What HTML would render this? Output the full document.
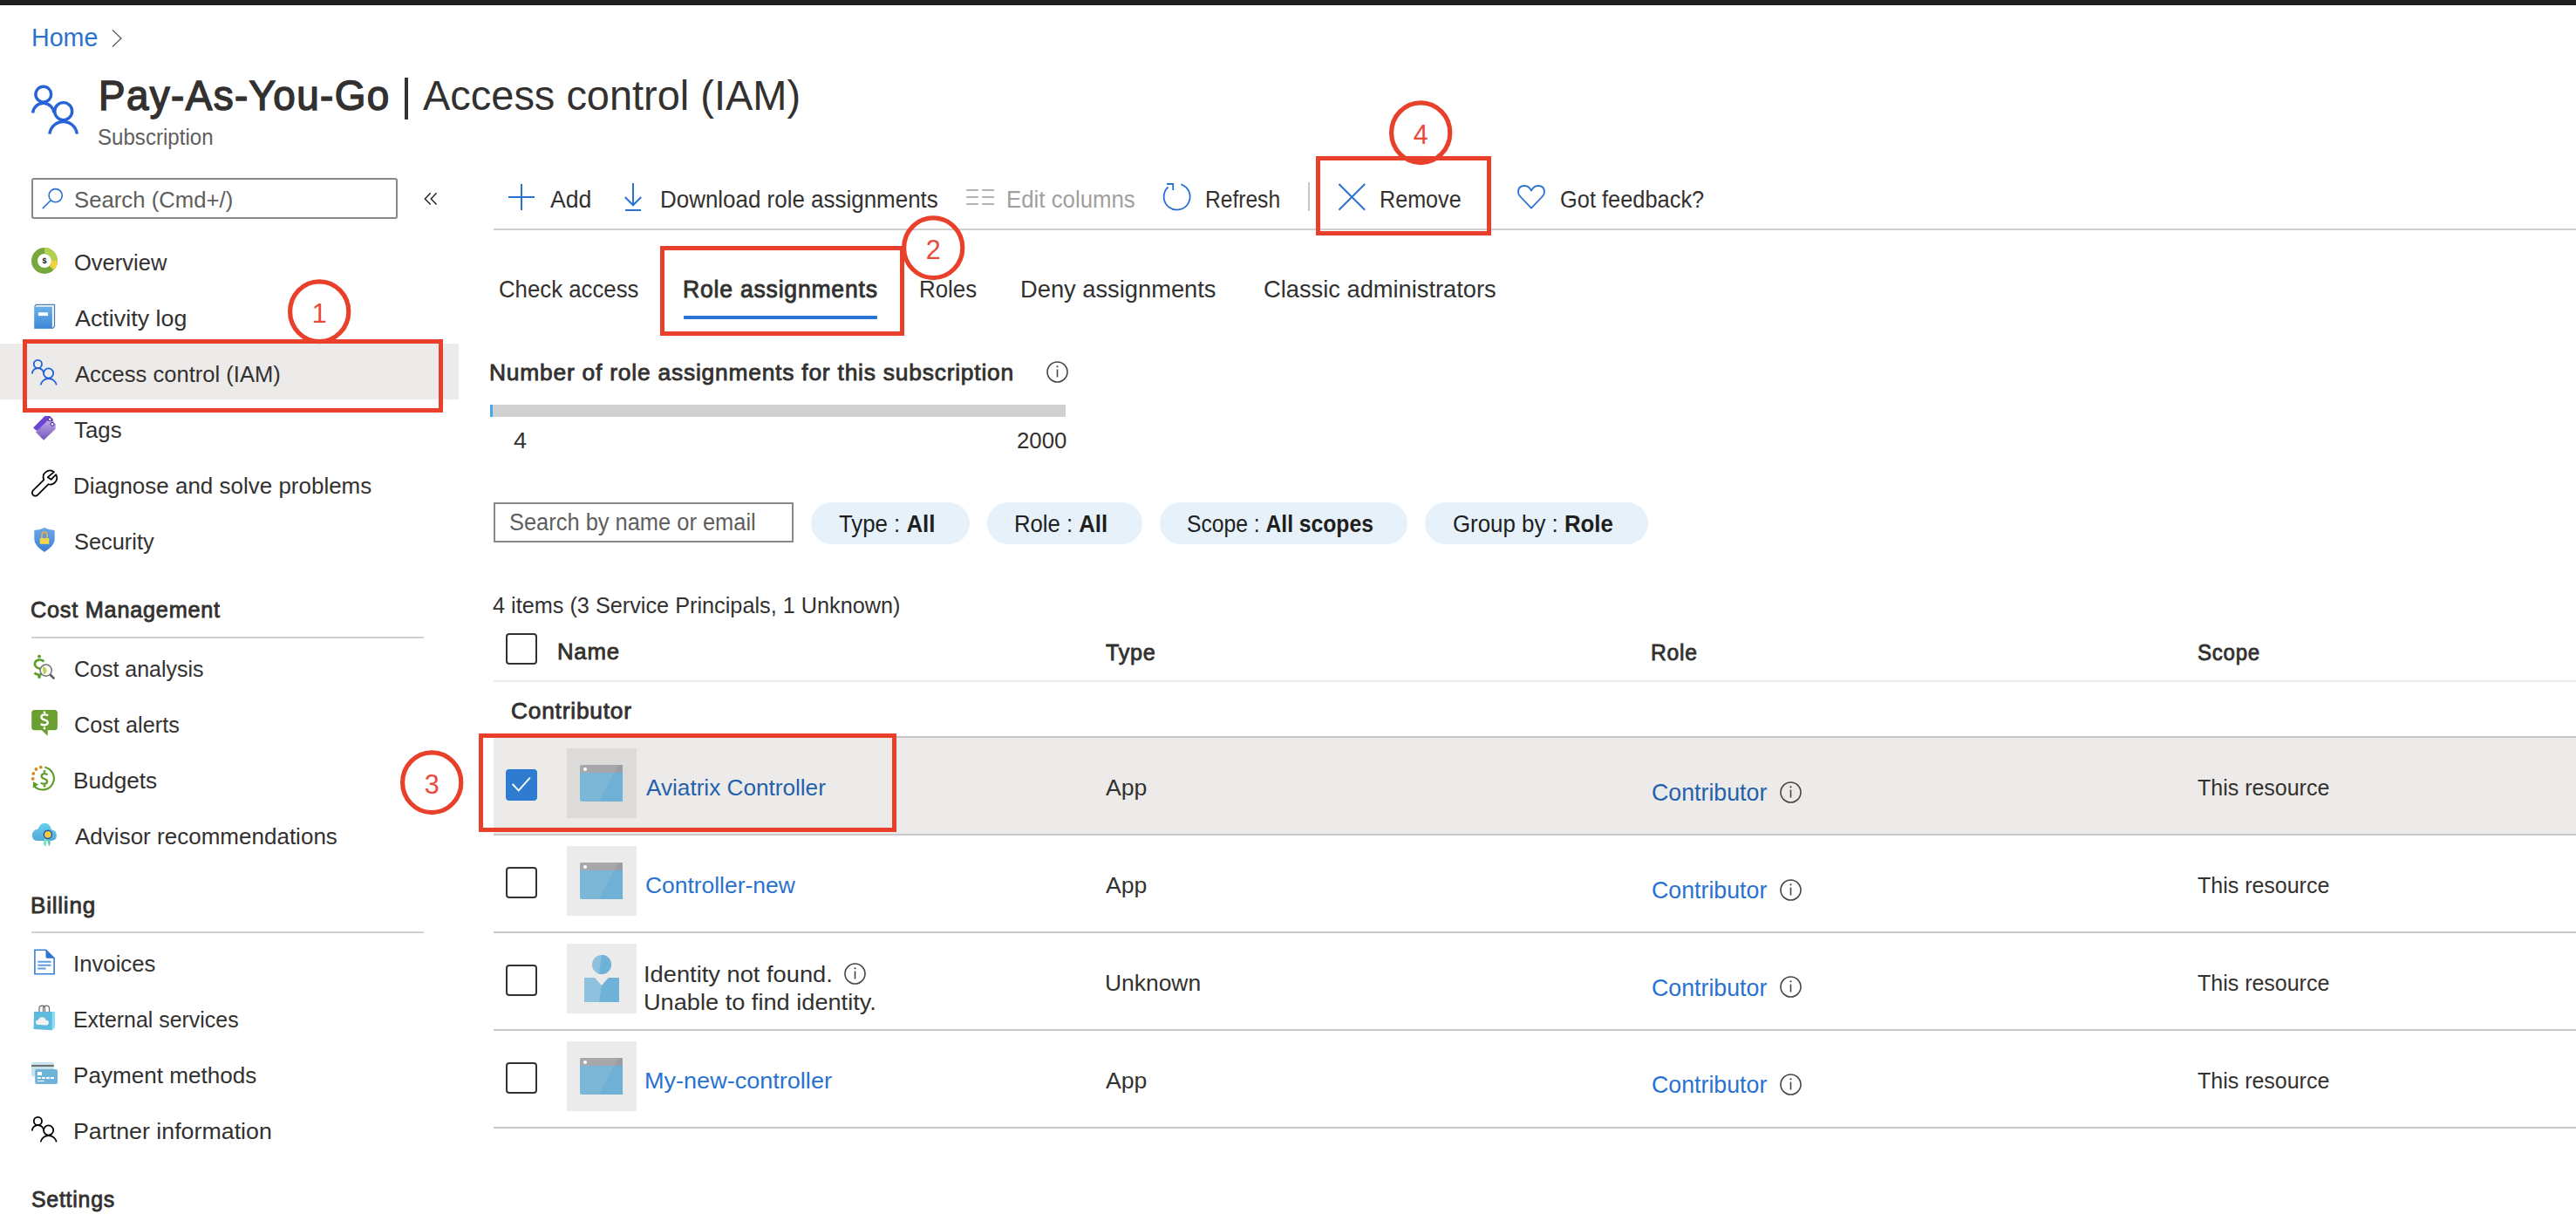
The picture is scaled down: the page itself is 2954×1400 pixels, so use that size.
<!DOCTYPE html>
<html><head><meta charset="utf-8"><title>Access control (IAM)</title>
<style>
html,body{margin:0;padding:0;background:#fff;}
body{width:2954px;height:1400px;position:relative;overflow:hidden;font-family:"Liberation Sans",sans-serif;}
.t{position:absolute;white-space:nowrap;line-height:1;transform-origin:0 0;}
.t b{font-weight:700;}
.r{position:absolute;}
svg{position:absolute;overflow:visible;}
</style></head><body>

<div class="r" style="left:0;top:0;width:2954px;height:6px;background:#1f1f1f"></div>
<div class="r" style="left:0;top:394px;width:526px;height:64px;background:#edebe9"></div>
<div class="r" style="left:36px;top:204px;width:416px;height:43px;border:2px solid #8a8886;border-radius:3px"></div>
<div class="r" style="left:36px;top:730px;width:450px;height:2px;background:#d2d0ce"></div>
<div class="r" style="left:36px;top:1068px;width:450px;height:2px;background:#d2d0ce"></div>
<div class="r" style="left:566px;top:262px;width:2388px;height:2px;background:#d2d0ce"></div>
<div class="r" style="left:1500px;top:209px;width:2px;height:33px;background:#c8c6c4"></div>
<div class="r" style="left:784px;top:362px;width:222px;height:4px;background:#2b74d4;border-radius:1px"></div>
<div class="r" style="left:562px;top:464px;width:660px;height:14px;background:#d0d0d0"></div>
<div class="r" style="left:562px;top:464px;width:2.5px;height:14px;background:#45a8e8"></div>
<div class="r" style="left:566px;top:576px;width:340px;height:42px;border:2px solid #8a8886"></div>
<div class="r" style="left:929.5px;top:576px;width:182.5px;height:48px;border-radius:24px;background:#e7f1fa"></div>
<div class="r" style="left:1131.7px;top:576px;width:178.3px;height:48px;border-radius:24px;background:#e7f1fa"></div>
<div class="r" style="left:1330px;top:576px;width:284.0px;height:48px;border-radius:24px;background:#e7f1fa"></div>
<div class="r" style="left:1634px;top:576px;width:256.0px;height:48px;border-radius:24px;background:#e7f1fa"></div>
<div class="r" style="left:580px;top:726px;width:32px;height:32px;border:2px solid #323130;border-radius:4px"></div>
<div class="r" style="left:566px;top:780px;width:2388px;height:2px;background:#edebe9"></div>
<div class="r" style="left:566px;top:844px;width:2388px;height:2px;background:#c8c6c4"></div>
<div class="r" style="left:566px;top:846px;width:2388px;height:110px;background:#edebe9"></div>
<div class="r" style="left:566px;top:956px;width:2388px;height:2px;background:#c8c8c8"></div>
<div class="r" style="left:566px;top:1068px;width:2388px;height:2px;background:#c8c8c8"></div>
<div class="r" style="left:566px;top:1180px;width:2388px;height:2px;background:#c8c8c8"></div>
<div class="r" style="left:566px;top:1292px;width:2388px;height:2px;background:#c8c8c8"></div>
<div class="r" style="left:580px;top:882px;width:36px;height:36px;background:#2f7bd0;border-radius:4px"></div>
<svg width="36" height="36" style="left:580px;top:882px"><path d="M7.6 17 L14.7 24.3 L27.9 9.7" fill="none" stroke="#fff" stroke-width="1.9"/></svg>
<div class="r" style="left:580px;top:994px;width:32px;height:32px;border:2px solid #323130;border-radius:4px"></div>
<div class="r" style="left:580px;top:1106px;width:32px;height:32px;border:2px solid #323130;border-radius:4px"></div>
<div class="r" style="left:580px;top:1218px;width:32px;height:32px;border:2px solid #323130;border-radius:4px"></div>
<div class="r" style="left:650px;top:858px;width:80px;height:80px;background:#dcdbd9"></div>
<div class="r" style="left:650px;top:970px;width:80px;height:80px;background:#ebebeb"></div>
<div class="r" style="left:650px;top:1082px;width:80px;height:80px;background:#ebebeb"></div>
<div class="r" style="left:650px;top:1194px;width:80px;height:80px;background:#ebebeb"></div>
<svg width="50" height="42" style="left:665px;top:877px" viewBox="0 0 50 42"><rect x="0" y="0" width="49" height="42" rx="2" fill="#7db7d8"/><path d="M22 42 L44 0 L49 0 L49 42 Z" fill="#6eb0d6"/><path d="M0 2 Q0 0 2 0 L47 0 Q49 0 49 2 L49 9 L0 9 Z" fill="#a7a8ab"/><path d="M44 0 L47 0 Q49 0 49 2 L49 9 L39.5 9 Z" fill="#9d9ea1"/><circle cx="6" cy="5" r="2" fill="#fff"/></svg>
<svg width="50" height="42" style="left:665px;top:989px" viewBox="0 0 50 42"><rect x="0" y="0" width="49" height="42" rx="2" fill="#7db7d8"/><path d="M22 42 L44 0 L49 0 L49 42 Z" fill="#6eb0d6"/><path d="M0 2 Q0 0 2 0 L47 0 Q49 0 49 2 L49 9 L0 9 Z" fill="#a7a8ab"/><path d="M44 0 L47 0 Q49 0 49 2 L49 9 L39.5 9 Z" fill="#9d9ea1"/><circle cx="6" cy="5" r="2" fill="#fff"/></svg>
<svg width="50" height="42" style="left:665px;top:1213px" viewBox="0 0 50 42"><rect x="0" y="0" width="49" height="42" rx="2" fill="#7db7d8"/><path d="M22 42 L44 0 L49 0 L49 42 Z" fill="#6eb0d6"/><path d="M0 2 Q0 0 2 0 L47 0 Q49 0 49 2 L49 9 L0 9 Z" fill="#a7a8ab"/><path d="M44 0 L47 0 Q49 0 49 2 L49 9 L39.5 9 Z" fill="#9d9ea1"/><circle cx="6" cy="5" r="2" fill="#fff"/></svg>
<svg width="50" height="50" style="left:665px;top:1092px" viewBox="0 0 50 50"><circle cx="25" cy="14" r="11" fill="#8fc1de"/><path d="M25 3 A11 11 0 0 1 25 25 L22 25 Z" fill="#6fb2d7"/><path d="M5 29 L17 29 L25 38 L33 29 L45 29 L45 57 L5 57 Z" fill="#8fc1de"/><path d="M25 38 L33 29 L45 29 L45 57 L22 57 Z" fill="#6fb2d7"/></svg>
<svg width="27.0" height="27.0" style="left:1198.5px;top:412.5px" viewBox="-13.5 -13.5 27.0 27.0"><circle cx="0" cy="0" r="11.5" fill="none" stroke="#484644" stroke-width="1.6"/><rect x="-0.8" y="-3" width="1.6" height="9" fill="#484644"/><circle cx="0" cy="-6.2" r="1.1" fill="#484644"/></svg>
<svg width="27.0" height="27.0" style="left:966.7px;top:1102.5px" viewBox="-13.5 -13.5 27.0 27.0"><circle cx="0" cy="0" r="11.5" fill="none" stroke="#484644" stroke-width="1.6"/><rect x="-0.8" y="-3" width="1.6" height="9" fill="#484644"/><circle cx="0" cy="-6.2" r="1.1" fill="#484644"/></svg>
<svg width="27.0" height="27.0" style="left:2040.3000000000002px;top:894.5px" viewBox="-13.5 -13.5 27.0 27.0"><circle cx="0" cy="0" r="11.5" fill="none" stroke="#484644" stroke-width="1.6"/><rect x="-0.8" y="-3" width="1.6" height="9" fill="#484644"/><circle cx="0" cy="-6.2" r="1.1" fill="#484644"/></svg>
<svg width="27.0" height="27.0" style="left:2040.3000000000002px;top:1006.5px" viewBox="-13.5 -13.5 27.0 27.0"><circle cx="0" cy="0" r="11.5" fill="none" stroke="#484644" stroke-width="1.6"/><rect x="-0.8" y="-3" width="1.6" height="9" fill="#484644"/><circle cx="0" cy="-6.2" r="1.1" fill="#484644"/></svg>
<svg width="27.0" height="27.0" style="left:2040.3000000000002px;top:1118.0px" viewBox="-13.5 -13.5 27.0 27.0"><circle cx="0" cy="0" r="11.5" fill="none" stroke="#484644" stroke-width="1.6"/><rect x="-0.8" y="-3" width="1.6" height="9" fill="#484644"/><circle cx="0" cy="-6.2" r="1.1" fill="#484644"/></svg>
<svg width="27.0" height="27.0" style="left:2040.3000000000002px;top:1229.5px" viewBox="-13.5 -13.5 27.0 27.0"><circle cx="0" cy="0" r="11.5" fill="none" stroke="#484644" stroke-width="1.6"/><rect x="-0.8" y="-3" width="1.6" height="9" fill="#484644"/><circle cx="0" cy="-6.2" r="1.1" fill="#484644"/></svg>
<div class="t" style="left:35.73px;top:29.49px;font-size:29.07px;font-weight:400;color:#2a72d0;transform:scaleX(0.9851)">Home</div>
<div class="t" style="left:112.99px;top:84.76px;font-size:48.98px;font-weight:400;color:#323130;-webkit-text-stroke:1.57px #323130;letter-spacing:1.47px;transform:scaleX(0.9358)">Pay-As-You-Go</div>
<div class="t" style="left:485.20px;top:84.76px;font-size:48.98px;font-weight:400;color:#323130;transform:scaleX(0.9588)">Access control (IAM)</div>
<div class="t" style="left:112.05px;top:144.78px;font-size:25.44px;font-weight:400;color:#605e5c;transform:scaleX(0.9467)">Subscription</div>
<div class="t" style="left:85.02px;top:216.26px;font-size:26.16px;font-weight:400;color:#605e5c;transform:scaleX(0.9836)">Search (Cmd+/)</div>
<div class="t" style="left:85.03px;top:288.01px;font-size:26.45px;font-weight:400;color:#323130;transform:scaleX(0.9656)">Overview</div>
<div class="t" style="left:86.00px;top:352.01px;font-size:26.45px;font-weight:400;color:#323130;transform:scaleX(1.0160)">Activity log</div>
<div class="t" style="left:86.00px;top:415.51px;font-size:26.45px;font-weight:400;color:#323130;transform:scaleX(0.9669)">Access control (IAM)</div>
<div class="t" style="left:85.02px;top:480.01px;font-size:26.45px;font-weight:400;color:#323130;transform:scaleX(0.9769)">Tags</div>
<div class="t" style="left:84.03px;top:544.26px;font-size:26.45px;font-weight:400;color:#323130;transform:scaleX(0.9826)">Diagnose and solve problems</div>
<div class="t" style="left:85.04px;top:608.01px;font-size:26.45px;font-weight:400;color:#323130;transform:scaleX(0.9601)">Security</div>
<div class="t" style="left:35.03px;top:686.26px;font-size:26.16px;font-weight:400;color:#323130;-webkit-text-stroke:0.84px #323130;letter-spacing:0.78px;transform:scaleX(0.9665)">Cost Management</div>
<div class="t" style="left:85.05px;top:753.76px;font-size:26.45px;font-weight:400;color:#323130;transform:scaleX(0.9452)">Cost analysis</div>
<div class="t" style="left:85.04px;top:817.51px;font-size:26.45px;font-weight:400;color:#323130;transform:scaleX(0.9560)">Cost alerts</div>
<div class="t" style="left:84.02px;top:882.01px;font-size:26.45px;font-weight:400;color:#323130;transform:scaleX(0.9920)">Budgets</div>
<div class="t" style="left:86.00px;top:946.01px;font-size:26.45px;font-weight:400;color:#323130;transform:scaleX(0.9844)">Advisor recommendations</div>
<div class="t" style="left:35.01px;top:1024.51px;font-size:26.16px;font-weight:400;color:#323130;-webkit-text-stroke:0.84px #323130;letter-spacing:0.78px;transform:scaleX(0.9965)">Billing</div>
<div class="t" style="left:84.05px;top:1091.76px;font-size:26.45px;font-weight:400;color:#323130;transform:scaleX(0.9734)">Invoices</div>
<div class="t" style="left:84.12px;top:1156.01px;font-size:26.45px;font-weight:400;color:#323130;transform:scaleX(0.9419)">External services</div>
<div class="t" style="left:84.03px;top:1220.01px;font-size:26.45px;font-weight:400;color:#323130;transform:scaleX(0.9869)">Payment methods</div>
<div class="t" style="left:83.97px;top:1284.01px;font-size:26.45px;font-weight:400;color:#323130;transform:scaleX(1.0136)">Partner information</div>
<div class="t" style="left:35.95px;top:1362.26px;font-size:26.16px;font-weight:400;color:#323130;-webkit-text-stroke:0.84px #323130;letter-spacing:0.78px;transform:scaleX(0.9525)">Settings</div>
<div class="t" style="left:630.50px;top:215.64px;font-size:26.89px;font-weight:400;color:#323130;transform:scaleX(0.9891)">Add</div>
<div class="t" style="left:756.82px;top:215.64px;font-size:26.89px;font-weight:400;color:#323130;transform:scaleX(0.9656)">Download role assignments</div>
<div class="t" style="left:1154.33px;top:215.64px;font-size:26.89px;font-weight:400;color:#a19f9d;transform:scaleX(0.9603)">Edit columns</div>
<div class="t" style="left:1381.92px;top:215.64px;font-size:26.89px;font-weight:400;color:#323130;transform:scaleX(0.9148)">Refresh</div>
<div class="t" style="left:1581.88px;top:215.64px;font-size:26.89px;font-weight:400;color:#323130;transform:scaleX(0.9356)">Remove</div>
<div class="t" style="left:1788.55px;top:215.64px;font-size:26.89px;font-weight:400;color:#323130;transform:scaleX(0.9451)">Got feedback?</div>
<div class="t" style="left:572.08px;top:317.66px;font-size:28.05px;font-weight:400;color:#323130;transform:scaleX(0.9191)">Check access</div>
<div class="t" style="left:783.11px;top:317.66px;font-size:28.05px;font-weight:400;color:#323130;-webkit-text-stroke:0.90px #323130;letter-spacing:0.84px;transform:scaleX(0.9464)">Role assignments</div>
<div class="t" style="left:1053.86px;top:317.66px;font-size:28.05px;font-weight:400;color:#323130;transform:scaleX(0.9217)">Roles</div>
<div class="t" style="left:1169.95px;top:317.66px;font-size:28.05px;font-weight:400;color:#323130;transform:scaleX(0.9730)">Deny assignments</div>
<div class="t" style="left:1449.03px;top:317.66px;font-size:28.05px;font-weight:400;color:#323130;transform:scaleX(0.9724)">Classic administrators</div>
<div class="t" style="left:561.02px;top:414.19px;font-size:26.60px;font-weight:400;color:#323130;-webkit-text-stroke:0.85px #323130;letter-spacing:0.80px;transform:scaleX(0.9910)">Number of role assignments for this subscription</div>
<div class="t" style="left:588.78px;top:492.19px;font-size:26.60px;font-weight:400;color:#323130;transform:scaleX(1.0154)">4</div>
<div class="t" style="left:1165.53px;top:492.19px;font-size:26.60px;font-weight:400;color:#323130;transform:scaleX(0.9684)">2000</div>
<div class="t" style="left:583.95px;top:585.77px;font-size:26.74px;font-weight:400;color:#605e5c;transform:scaleX(0.9512)">Search by name or email</div>
<div class="t" style="left:962.07px;top:586.83px;font-size:27.62px;font-weight:400;color:#201f1e;transform:scaleX(0.9348)">Type : <b>All</b></div>
<div class="t" style="left:1163.14px;top:586.83px;font-size:27.62px;font-weight:400;color:#201f1e;transform:scaleX(0.9306)">Role : <b>All</b></div>
<div class="t" style="left:1361.41px;top:586.83px;font-size:27.62px;font-weight:400;color:#201f1e;transform:scaleX(0.8932)">Scope : <b>All scopes</b></div>
<div class="t" style="left:1665.76px;top:586.83px;font-size:27.62px;font-weight:400;color:#201f1e;transform:scaleX(0.9364)">Group by : <b>Role</b></div>
<div class="t" style="left:565.02px;top:682.41px;font-size:25.87px;font-weight:400;color:#323130;transform:scaleX(0.9769)">4 items (3 Service Principals, 1 Unknown)</div>
<div class="t" style="left:639.33px;top:734.06px;font-size:26.16px;font-weight:400;color:#323130;-webkit-text-stroke:0.84px #323130;letter-spacing:0.78px;transform:scaleX(0.9843)">Name</div>
<div class="t" style="left:1268.30px;top:734.76px;font-size:26.16px;font-weight:400;color:#323130;-webkit-text-stroke:0.84px #323130;letter-spacing:0.78px;transform:scaleX(0.9610)">Type</div>
<div class="t" style="left:1893.11px;top:734.76px;font-size:26.16px;font-weight:400;color:#323130;-webkit-text-stroke:0.84px #323130;letter-spacing:0.78px;transform:scaleX(0.9444)">Role</div>
<div class="t" style="left:2519.78px;top:734.76px;font-size:26.16px;font-weight:400;color:#323130;-webkit-text-stroke:0.84px #323130;letter-spacing:0.78px;transform:scaleX(0.9211)">Scope</div>
<div class="t" style="left:585.99px;top:802.06px;font-size:26.16px;font-weight:400;color:#323130;-webkit-text-stroke:0.84px #323130;letter-spacing:0.78px;transform:scaleX(1.0059)">Contributor</div>
<div class="t" style="left:740.50px;top:889.51px;font-size:26.45px;font-weight:400;color:#2461ab;transform:scaleX(0.9889)">Aviatrix Controller</div>
<div class="t" style="left:1268.00px;top:889.71px;font-size:26.45px;font-weight:400;color:#323130;transform:scaleX(1.0065)">App</div>
<div class="t" style="left:1894.01px;top:895.82px;font-size:27.03px;font-weight:400;color:#2461ab;transform:scaleX(0.9902)">Contributor</div>
<div class="t" style="left:2519.76px;top:889.71px;font-size:26.45px;font-weight:400;color:#323130;transform:scaleX(0.9449)">This resource</div>
<div class="t" style="left:739.50px;top:1001.51px;font-size:26.45px;font-weight:400;color:#2a72d0;transform:scaleX(0.9988)">Controller-new</div>
<div class="t" style="left:1268.00px;top:1001.71px;font-size:26.45px;font-weight:400;color:#323130;transform:scaleX(1.0065)">App</div>
<div class="t" style="left:1894.01px;top:1008.02px;font-size:27.03px;font-weight:400;color:#2a72d0;transform:scaleX(0.9902)">Contributor</div>
<div class="t" style="left:2519.76px;top:1002.01px;font-size:26.45px;font-weight:400;color:#323130;transform:scaleX(0.9449)">This resource</div>
<div class="t" style="left:738.44px;top:1104.01px;font-size:26.45px;font-weight:400;color:#323130;transform:scaleX(1.0316)">Identity not found.</div>
<div class="t" style="left:738.44px;top:1135.81px;font-size:26.45px;font-weight:400;color:#323130;transform:scaleX(1.0278)">Unable to find identity.</div>
<div class="t" style="left:1267.00px;top:1113.81px;font-size:26.45px;font-weight:400;color:#323130;transform:scaleX(0.9991)">Unknown</div>
<div class="t" style="left:1894.01px;top:1119.62px;font-size:27.03px;font-weight:400;color:#2a72d0;transform:scaleX(0.9902)">Contributor</div>
<div class="t" style="left:2519.76px;top:1113.91px;font-size:26.45px;font-weight:400;color:#323130;transform:scaleX(0.9449)">This resource</div>
<div class="t" style="left:738.95px;top:1226.21px;font-size:26.45px;font-weight:400;color:#2a72d0;transform:scaleX(1.0231)">My-new-controller</div>
<div class="t" style="left:1268.00px;top:1226.01px;font-size:26.45px;font-weight:400;color:#323130;transform:scaleX(1.0065)">App</div>
<div class="t" style="left:1894.01px;top:1230.92px;font-size:27.03px;font-weight:400;color:#2a72d0;transform:scaleX(0.9902)">Contributor</div>
<div class="t" style="left:2519.76px;top:1226.01px;font-size:26.45px;font-weight:400;color:#323130;transform:scaleX(0.9449)">This resource</div>
<div class="r" style="left:464px;top:89px;width:4px;height:48px;background:#323130"></div>
<svg width="20" height="30" style="left:124px;top:30px" viewBox="124 30 20 30"><path d="M129 34.5 L139 44 L129 53.5" fill="none" stroke="#605e5c" stroke-width="1.3"/></svg>
<svg width="70" height="70" style="left:30px;top:90px" viewBox="30 90 70 70" fill="none" stroke="#2563d6" stroke-width="3.4"><circle cx="49.8" cy="108.2" r="8.9"/><path d="M37.6 129.5 A12.2 12.2 0 0 1 61.9 129.3"/><circle cx="72.7" cy="127.6" r="10"/><path d="M56.9 153.6 A15.8 15.8 0 0 1 88.3 153.6"/></svg>
<svg width="40" height="40" style="left:40px;top:206px" viewBox="40 206 40 40" fill="none" stroke="#2a72d0" stroke-width="1.6"><circle cx="63.7" cy="224.2" r="7.6"/><path d="M58.2 229.7 L48.8 239.1"/></svg>
<svg width="40" height="40" style="left:476px;top:208px" viewBox="476 208 40 40" fill="none" stroke="#201f1e" stroke-width="1.4"><path d="M493.7 221.3 L487.3 227.9 L493.7 234.6 M500.6 221.3 L494.2 227.9 L500.6 234.6"/></svg>
<svg width="42" height="42" style="left:30px;top:406px" viewBox="30 406 42 42" fill="none" stroke="#1f5fd8" stroke-width="1.8"><circle cx="43.4" cy="417.4" r="4.6"/><path d="M36.9 428.6 A6.6 6.6 0 0 1 50.1 428.6"/><circle cx="55.6" cy="428" r="5.6"/><path d="M46.6 441.4 A9.3 9.3 0 0 1 64.8 441.4"/></svg>
<svg width="42" height="42" style="left:30px;top:1274px" viewBox="30 406 42 42" fill="none" stroke="#000000" stroke-width="1.8"><circle cx="43.4" cy="417.4" r="4.6"/><path d="M36.9 428.6 A6.6 6.6 0 0 1 50.1 428.6"/><circle cx="55.6" cy="428" r="5.6"/><path d="M46.6 441.4 A9.3 9.3 0 0 1 64.8 441.4"/></svg>
<svg width="32" height="32" style="left:35px;top:283px" viewBox="-16 -16 32 32"><circle r="11.5" fill="none" stroke="#76a83f" stroke-width="7"/><path d="M0 -15 A15 15 0 0 1 15 0 L8 0 A8 8 0 0 0 0 -8 Z" fill="#b5cf4e"/><path d="M15 0 A15 15 0 0 1 10.6 10.6 L5.66 5.66 A8 8 0 0 0 8 0 Z" fill="#f3d03e"/><text x="0" y="3.3" font-size="9" font-weight="700" text-anchor="middle" fill="#111" font-family="Liberation Sans">$</text></svg>
<svg width="30" height="32" style="left:37px;top:347px" viewBox="37 347 30 32"><defs><linearGradient id="gb" x1="0" y1="0" x2="0" y2="1"><stop offset="0" stop-color="#6cb0ea"/><stop offset="1" stop-color="#3b87d5"/></linearGradient></defs><path d="M39.5 351.6 L41.5 349.3 L62.5 349.3 L62.5 374.3 L59.9 376.9" fill="none" stroke="#4a7db5" stroke-width="1.3"/><rect x="39.2" y="351.6" width="20.7" height="25.3" fill="url(#gb)"/><rect x="43.9" y="358.2" width="11.1" height="3.9" fill="#fff"/></svg>
<svg width="32" height="34" style="left:36px;top:474px" viewBox="36 474 32 34"><defs><linearGradient id="gt" x1="0" y1="0" x2="0" y2="1"><stop offset="0" stop-color="#c0a6e6"/><stop offset="1" stop-color="#7356bb"/></linearGradient></defs><path d="M38.1 490.6 L51.3 477 L57.2 477 L60.8 480.8 L60.8 484 L42.2 494.1 Z" fill="#6b45d6"/><path d="M41 495.5 L54.8 482 L61 483.4 L63.9 486.5 L63.5 492 L50.1 504.7 Z" fill="url(#gt)"/><circle cx="57.2" cy="480.8" r="1.9" fill="#fff" stroke="#3b1f8a" stroke-width="1"/><circle cx="60" cy="486.3" r="1.9" fill="#fff" stroke="#3b1f8a" stroke-width="1"/></svg>
<svg width="34" height="34" style="left:34px;top:538px" viewBox="34 538 34 34" fill="none" stroke="#000" stroke-width="1.7" stroke-linejoin="round"><path d="M50.3 550.2 L37.9 562.4 A3.6 3.6 0 0 0 43.1 567.6 L55.6 555.2 A7.6 7.6 0 0 0 64.2 544.1 L58.6 549.8 L54.8 547.2 L62 541.2 A7.6 7.6 0 0 0 50.3 550.2 Z"/></svg>
<svg width="30" height="32" style="left:37px;top:602px" viewBox="37 602 30 32"><defs><linearGradient id="gs" x1="0" y1="0" x2="0" y2="1"><stop offset="0" stop-color="#6ea8ea"/><stop offset="1" stop-color="#3a7fd6"/></linearGradient></defs><path d="M39.3 608 Q45 608 51 604.9 Q57 608 62.7 608 L62.7 618.6 Q62.5 626 51 632.9 Q39.5 626 39.3 618.6 Z" fill="url(#gs)"/><path d="M48 617 L48 613.2 A3 3 0 0 1 54 613.2 L54 617" fill="none" stroke="#f2b233" stroke-width="1.6"/><rect x="45.7" y="617.1" width="10.6" height="6.7" fill="#f6d44a"/></svg>
<svg width="34" height="34" style="left:34px;top:748px" viewBox="34 748 34 34"><path d="M50.5 758.5 Q48 756.3 44.5 756.6 Q39.5 757.3 40 762.3 Q40.6 765.5 45.5 766.5 Q49.5 767.6 48.5 771.5 Q47.4 774.2 43.5 773.6 Q41 773 39.5 771.5" fill="none" stroke="#5a9e2a" stroke-width="2.6"/><circle cx="45" cy="752.7" r="1.9" fill="#5a9e2a"/><circle cx="45" cy="776.1" r="1.9" fill="#5a9e2a"/><circle cx="52.7" cy="768.6" r="6.6" fill="#fff" stroke="#707070" stroke-width="1.5"/><path d="M49.5 764 Q53.5 765.5 53.5 768.6 Q53.5 771.8 50.5 773.4 Q49 771 49.2 768.6 Q49 766 49.5 764Z" fill="#b9d24f"/><path d="M57.5 773.5 L62.3 778.3" stroke="#5c5c5c" stroke-width="2.6"/></svg>
<svg width="34" height="34" style="left:34px;top:812px" viewBox="34 812 34 34"><rect x="36.2" y="814" width="29.7" height="23.2" rx="3.5" fill="#6aa031"/><path d="M47.5 837 L54.8 837 L54.6 843.8 Z" fill="#6aa031"/><path d="M55 820.5 Q53.5 819.3 51 819.4 Q47.3 819.6 47.5 822.3 Q47.8 824.5 51 825.3 Q54.8 826.2 54.8 828.6 Q54.5 831.3 50.8 831.5 Q48.3 831.4 46.7 830" fill="none" stroke="#fff" stroke-width="2.4"/><circle cx="51" cy="816.8" r="1.4" fill="#fff"/><circle cx="51" cy="835" r="1.4" fill="#fff"/></svg>
<svg width="34" height="34" style="left:34px;top:876px" viewBox="34 876 34 34"><path d="M51.3 879.7 A13 13 0 1 1 39.5 901.5" fill="none" stroke="#5b9c26" stroke-width="2.1"/><path d="M37.6 903.4 L38.2 896.3 L44.2 899.5 Z" fill="#5b9c26"/><circle cx="46.8" cy="879.7" r="1.9" fill="#d78a1e"/><circle cx="41.4" cy="882" r="1.9" fill="#d78a1e"/><circle cx="38.3" cy="886.9" r="1.9" fill="#d78a1e"/><circle cx="37.7" cy="892.9" r="1.9" fill="#d78a1e"/><path d="M54.5 888.5 Q53 887 50.8 887.2 Q47.5 887.5 47.6 890.1 Q47.9 892.3 51 893 Q54.3 893.9 54.2 896.3 Q53.8 898.7 50.6 898.9 Q48.3 898.8 46.8 897.5" fill="none" stroke="#5b9c26" stroke-width="2.2"/><circle cx="51" cy="884.5" r="1.4" fill="#5b9c26"/><circle cx="51" cy="901.3" r="1.4" fill="#5b9c26"/></svg>
<svg width="34" height="34" style="left:34px;top:940px" viewBox="34 940 34 34"><defs><linearGradient id="gc" x1="0" y1="0" x2="0" y2="1"><stop offset="0" stop-color="#66d0f0"/><stop offset="1" stop-color="#52a9d6"/></linearGradient></defs><path d="M42.5 964 Q36.8 964 36.9 957.6 Q37.2 951.6 43.8 950.6 Q45.8 943.7 51.3 943.7 Q57.3 943.8 58.9 951.2 Q64.9 952 64.9 958 Q64.6 963.9 58.8 964 Z" fill="url(#gc)"/><path d="M51 961 L49.5 967.5 L52.3 970.7 L53.8 963 Z" fill="#78e2c8"/><path d="M56 961 L58 966.5 L56 970.7 L54.5 963 Z" fill="#5cc4ac"/><circle cx="54.9" cy="956.8" r="5.2" fill="#1a4fa0"/><circle cx="54.9" cy="956.8" r="3.9" fill="#f7c940"/></svg>
<svg width="30" height="34" style="left:37px;top:1086px" viewBox="37 1086 30 34"><path d="M39.9 1089.2 L52.7 1089.2 L62.1 1098.6 L62.1 1116.8 L39.9 1116.8 Z" fill="#fff" stroke="#3a7fd5" stroke-width="1.6"/><path d="M52.5 1089.2 L62.1 1098.8 L53.5 1098.8 L52.5 1097.8 Z" fill="#2f75cf"/><path d="M43.3 1102.7 L58.5 1102.7 M43.3 1106.7 L58.5 1106.7 M43.3 1110.6 L52.5 1110.6" stroke="#5e9ae6" stroke-width="2"/></svg>
<svg width="30" height="36" style="left:37px;top:1150px" viewBox="37 1150 30 36"><path d="M45 1160 L45 1156 Q45 1153.2 48.5 1153.2 Q51.5 1153.2 51.5 1156 L51.5 1160 M49.5 1160 L49.5 1156 Q49.5 1153.2 53 1153.2 Q56.5 1153.2 56.5 1156 L56.5 1160" fill="none" stroke="#6b6b6b" stroke-width="1.2"/><path d="M39 1160 L62.5 1160 L62.7 1178 L59.5 1181.2 L38.6 1180 Z" fill="#5ebbde"/><path d="M59.8 1160 L62.5 1160 L62.7 1178 L59.5 1181.2 Z" fill="#86e0f8"/><path d="M43.5 1175 Q41 1175 41 1172.6 Q41 1169.8 43.8 1169.6 Q44.5 1166.3 48.5 1166.2 Q52 1166.3 52.5 1169.8 Q55.9 1170 55.9 1172.5 Q55.9 1175.3 53 1175.4 Z" fill="#f3f3f3"/></svg>
<svg width="34" height="30" style="left:34px;top:1214px" viewBox="34 1214 34 30"><rect x="36.1" y="1218" width="25.7" height="16.6" rx="2" fill="#c5e1ee"/><rect x="36.1" y="1221" width="25.7" height="2" fill="#6e6e6e"/><rect x="40.2" y="1226" width="25.8" height="17" rx="2" fill="#6fb3d8"/><rect x="43" y="1229" width="5" height="4" fill="#fff"/><path d="M43 1236 L46.8 1236 M48 1236 L51.8 1236 M53 1236 L56.8 1236 M58 1236 L61.8 1236" stroke="#fff" stroke-width="1.8"/><path d="M43 1239.5 L51 1239.5" stroke="#fff" stroke-width="1"/></svg>
<svg width="40" height="40" style="left:578px;top:206px" viewBox="578 206 40 40" fill="none" stroke="#2a72d0" stroke-width="2"><path d="M598 211 L598 241 M583 226 L613 226"/></svg>
<svg width="30" height="40" style="left:712px;top:206px" viewBox="712 206 30 40" fill="none" stroke="#2a72d0" stroke-width="2"><path d="M726 210 L726 235 M716.8 226 L726 235.3 L735.2 226 M717 241 L735 241"/></svg>
<svg width="40" height="30" style="left:1104px;top:212px" viewBox="1104 212 40 30" fill="none" stroke="#9b9b9b" stroke-width="1.6"><path d="M1108.2 218 L1121.7 218 M1108.2 226 L1121.7 226 M1108.2 234 L1121.7 234 M1126.1 218 L1140 218 M1126.1 226 L1140 226 M1126.1 234 L1140 234"/></svg>
<svg width="40" height="40" style="left:1330px;top:206px" viewBox="1330 206 40 40" fill="none" stroke="#2a72d0" stroke-width="1.8"><path d="M1354.3 211.3 A15 15 0 1 1 1339.5 214.5"/><path d="M1338 211 L1345.2 211 L1345.2 218"/></svg>
<svg width="40" height="40" style="left:1530px;top:206px" viewBox="1530 206 40 40" fill="none" stroke="#2a72d0" stroke-width="2"><path d="M1535.4 211 L1565.2 240.8 M1565.2 211 L1535.4 240.8"/></svg>
<svg width="40" height="36" style="left:1736px;top:208px" viewBox="1736 208 40 36" fill="none" stroke="#2a72d0" stroke-width="1.8" stroke-linejoin="round"><path d="M1756 218.5 Q1759 212.6 1764.5 213 Q1771 213.7 1771 220 Q1771 223 1768.5 225.5 L1756 238.6 L1743.5 225.5 Q1741 223 1741 220 Q1741 213.7 1747.5 213 Q1753 212.6 1756 218.5 Z"/></svg>
<div class="r" style="left:25.5px;top:388.5px;width:472.0px;height:74.5px;border:5px solid #e8402a"></div>
<div class="r" style="left:757px;top:282px;width:269.5px;height:92.5px;border:5px solid #e8402a"></div>
<div class="r" style="left:548.5px;top:840.5px;width:469.2px;height:103.9px;border:5px solid #e8402a"></div>
<div class="r" style="left:1509px;top:179px;width:190.5px;height:80.5px;border:5px solid #e8402a"></div>
<svg width="82.4" height="82.4" style="left:324.6px;top:315.8px" viewBox="-41.2 -41.2 82.4 82.4"><ellipse rx="33.6" ry="34.400000000000006" fill="none" stroke="#e8402a" stroke-width="5.2"/><text x="0" y="12.4" font-size="30.5" text-anchor="middle" fill="#e84a3a" font-family="Liberation Sans">1</text></svg>
<svg width="82.4" height="82.4" style="left:1029.3px;top:242.60000000000002px" viewBox="-41.2 -41.2 82.4 82.4"><ellipse rx="33.6" ry="34.400000000000006" fill="none" stroke="#e8402a" stroke-width="5.2"/><text x="0" y="12.4" font-size="30.5" text-anchor="middle" fill="#e84a3a" font-family="Liberation Sans">2</text></svg>
<svg width="82.4" height="82.4" style="left:453.8px;top:855.8px" viewBox="-41.2 -41.2 82.4 82.4"><ellipse rx="33.6" ry="34.400000000000006" fill="none" stroke="#e8402a" stroke-width="5.2"/><text x="0" y="12.4" font-size="30.5" text-anchor="middle" fill="#e84a3a" font-family="Liberation Sans">3</text></svg>
<svg width="82.4" height="82.4" style="left:1588.1px;top:111.3px" viewBox="-41.2 -41.2 82.4 82.4"><ellipse rx="33.6" ry="34.400000000000006" fill="none" stroke="#e8402a" stroke-width="5.2"/><text x="0" y="12.4" font-size="30.5" text-anchor="middle" fill="#e84a3a" font-family="Liberation Sans">4</text></svg>
</body></html>
